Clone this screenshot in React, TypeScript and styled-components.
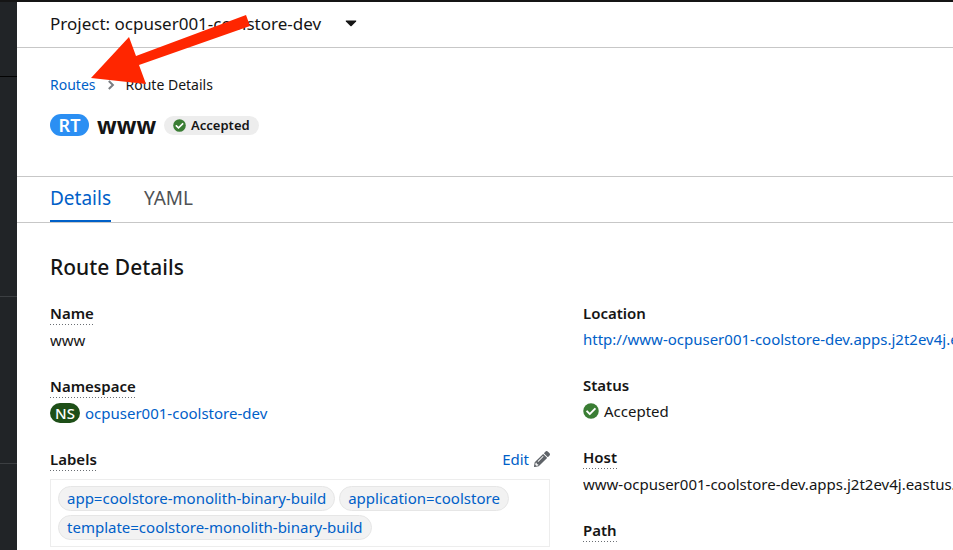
import React from "react";
import styled, { createGlobalStyle } from "styled-components";

const link = "#0060c8";
const ink = "#151515";
const rule = "#c7c7c7";

const GlobalStyle = createGlobalStyle`
  *, *::before, *::after { box-sizing: border-box; }
  body {
    margin: 0;
    color: ${ink};
    background: #fff;
    font: 400 15px/24px "Noto Sans", "Open Sans", sans-serif;
    overflow: hidden;
  }
  button { font: inherit; color: inherit; }
`;

const Page = styled.div`
  display: flex;
  height: 100vh;
  border-top: 2px solid ${ink};
  overflow: hidden;
`;

const Sidebar = styled.nav`
  flex: 0 0 17px;
  display: flex;
  flex-direction: column;
  background: #212427;
`;

const SidebarSection = styled.div<{ $height: number; $line: string }>`
  height: ${(p) => p.$height}px;
  border-bottom: 1px solid ${(p) => p.$line};
`;

const Main = styled.main`
  flex: 1;
  min-width: 0;
`;

const ProjectBar = styled.div`
  display: flex;
  align-items: center;
  height: 46px;
  padding: 0 33px 2px;
  border-bottom: 1px solid ${rule};
`;

const ProjectButton = styled.button`
  display: flex;
  align-items: center;
  gap: 24px;
  padding: 0;
  border: 0;
  background: none;
  font-size: 17px;
  line-height: 24px;
  white-space: nowrap;
`;

const Header = styled.header`
  height: 129px;
  padding: 25px 33px 0;
  border-bottom: 1px solid ${rule};
`;

const Breadcrumb = styled.ol`
  display: flex;
  align-items: center;
  gap: 11px;
  margin: 0 0 16px;
  padding: 0;
  list-style: none;
  font-size: 14px;
`;

const Crumb = styled.li`
  display: flex;
  align-items: center;
  gap: 11px;
`;

const Link = styled.a`
  color: ${link};
  text-decoration: none;
`;

const Title = styled.h1`
  display: flex;
  align-items: center;
  gap: 8px;
  margin: 0;
  font-size: 23px;
  font-weight: 700;
  line-height: 24px;
`;

const KindBadge = styled.span<{ $color: string; $large?: boolean }>`
  display: inline-flex;
  align-items: center;
  justify-content: center;
  width: ${(p) => (p.$large ? 39 : 30)}px;
  height: ${(p) => (p.$large ? 22 : 20)}px;
  border-radius: 11px;
  color: #fff;
  background: ${(p) => p.$color};
  font-size: ${(p) => (p.$large ? 18 : 15)}px;
  font-weight: ${(p) => (p.$large ? 600 : 500)};
  line-height: 20px;
`;

const StatusPill = styled.span`
  display: inline-flex;
  align-items: center;
  gap: 5px;
  height: 19px;
  padding: 0 9px;
  border-radius: 10px;
  background: #ededed;
  font-size: 13px;
  font-weight: 600;
  line-height: 18px;
`;

const Tabs = styled.div`
  display: flex;
  gap: 33px;
  height: 46px;
  padding: 0 33px;
  border-bottom: 1px solid ${rule};
`;

const Tab = styled.button<{ $active?: boolean }>`
  padding: 0 0 3px;
  border: 0;
  background: none;
  color: ${(p) => (p.$active ? link : "#4f5255")};
  box-shadow: ${(p) => (p.$active ? `inset 0 -2px ${link}` : "none")};
  font-size: 19px;
  line-height: 40px;
`;

const Body = styled.section`
  padding: 30px 0 0 33px;
`;

const Heading = styled.h2`
  margin: 0 0 20px;
  font-size: 21px;
  font-weight: 500;
  line-height: 28px;
`;

const Columns = styled.div`
  display: grid;
  grid-template-columns: 500px minmax(0, 1fr);
  gap: 33px;
`;

const Fields = styled.dl`
  display: flex;
  flex-direction: column;
  gap: 22px;
  min-width: 0;
  margin: 0;
`;

const Field = styled.div`
  min-width: 0;
`;

const Term = styled.dt<{ $hint?: boolean }>`
  display: flex;
  align-items: flex-start;
  justify-content: space-between;
  height: ${(p) => (p.$hint ? 27 : 26)}px;
  font-weight: 600;
`;

const Hint = styled.span`
  height: 24px;
  background: repeating-linear-gradient(90deg, #6a6e73 0 1px, transparent 1px 3px)
    bottom / 100% 1px no-repeat;
`;

const Value = styled.dd<{ $gap?: number }>`
  display: flex;
  align-items: center;
  gap: ${(p) => p.$gap ?? 0}px;
  margin: 0;
  overflow: hidden;
  white-space: nowrap;
`;

const EditButton = styled.button`
  display: flex;
  align-items: center;
  gap: 5px;
  padding: 0;
  border: 0;
  background: none;
  color: ${link};
  font-weight: 400;
`;

const LabelBox = styled.dd`
  display: flex;
  flex-wrap: wrap;
  gap: 4px;
  margin: 5px 0 0;
  padding: 6px 7px;
  border: 1px solid #ededed;
`;

const Chip = styled.a`
  padding: 0 8px;
  border: 1px solid #e6e6e6;
  border-radius: 13px;
  background: #f2f2f2;
  color: ${link};
  line-height: 23px;
  text-decoration: none;
`;

const CheckIcon = ({ size }: { size: number }) => (
  <svg width={size} height={size} viewBox="0 0 512 512" aria-hidden="true">
    <circle cx="256" cy="256" r="248" fill="#3a7d34" />
    <path
      fill="#fff"
      d="M227 387 411 203a16 16 0 0 0 0-23l-22-22a16 16 0 0 0-23 0L216 308l-70-70a16 16 0 0 0-23 0l-22 22a16 16 0 0 0 0 23l104 104a16 16 0 0 0 22 0z"
    />
  </svg>
);

const CaretIcon = () => (
  <svg width="12" height="7" viewBox="0 0 12 7" aria-hidden="true">
    <path d="M1.2.5h9.6q.9.2.3.9L6.6 6q-.6.5-1.2 0L.9 1.4Q.3.7 1.2.5z" fill={ink} />
  </svg>
);

const ChevronIcon = () => (
  <svg width="8" height="10" viewBox="0 0 8 10" aria-hidden="true">
    <path d="M1.8 1 5.9 5 1.8 9" fill="none" stroke="#7a7d82" strokeWidth="2" />
  </svg>
);

const PencilIcon = () => (
  <svg width="16" height="16" viewBox="0 0 512 512" aria-hidden="true">
    <path
      fill="#5f6368"
      d="M498 142l-47 47c-5 5-12 5-17 0L323 78c-5-5-5-12 0-17l47-47c19-19 49-19 68 0l60 60c19 19 19 49 0 68zM284 100 22 362 0 484c-3 16 11 31 28 28l122-22 262-262c5-5 5-12 0-17L301 100c-5-5-13-5-17 0zM124 340c-5-6-5-14 0-20l154-154c6-5 14-5 20 0s5 14 0 20L144 340c-6 5-14 5-20 0zm-36 84h48v36l-65 11-30-30 11-65h36z"
    />
  </svg>
);

const Pointer = styled.svg`
  position: absolute;
  top: 0;
  left: 80px;
  pointer-events: none;
`;

const labels = [
  "app=coolstore-monolith-binary-build",
  "application=coolstore",
  "template=coolstore-monolith-binary-build",
];

export default function App() {
  return (
    <>
      <GlobalStyle />
      <Page>
        <Sidebar aria-label="Main navigation">
          <SidebarSection $height={75} $line="#030303" />
          <SidebarSection $height={220} $line="#3c3f42" />
          <SidebarSection $height={167} $line="#3c3f42" />
        </Sidebar>
        <Main>
          <ProjectBar>
            <ProjectButton>
              Project: ocpuser001-coolstore-dev
              <CaretIcon />
            </ProjectButton>
          </ProjectBar>
          <Header>
            <Breadcrumb>
              <Crumb>
                <Link href="#routes">Routes</Link>
                <ChevronIcon />
              </Crumb>
              <Crumb>Route Details</Crumb>
            </Breadcrumb>
            <Title>
              <KindBadge $color="#2b8ff3" $large>RT</KindBadge>
              www
              <StatusPill>
                <CheckIcon size={13} />
                Accepted
              </StatusPill>
            </Title>
          </Header>
          <Tabs role="tablist">
            <Tab role="tab" aria-selected="true" $active>Details</Tab>
            <Tab role="tab" aria-selected="false">YAML</Tab>
          </Tabs>
          <Body>
            <Heading>Route Details</Heading>
            <Columns>
              <Fields>
                <Field>
                  <Term $hint><Hint>Name</Hint></Term>
                  <Value>www</Value>
                </Field>
                <Field>
                  <Term $hint><Hint>Namespace</Hint></Term>
                  <Value $gap={5}>
                    <KindBadge $color="#1e4f18">NS</KindBadge>
                    <Link href="#namespace">ocpuser001-coolstore-dev</Link>
                  </Value>
                </Field>
                <Field>
                  <Term $hint>
                    <Hint>Labels</Hint>
                    <EditButton>
                      Edit
                      <PencilIcon />
                    </EditButton>
                  </Term>
                  <LabelBox>
                    {labels.map((label) => (
                      <Chip key={label} href="#search">{label}</Chip>
                    ))}
                  </LabelBox>
                </Field>
              </Fields>
              <Fields>
                <Field>
                  <Term>Location</Term>
                  <Value>
                    <Link href="#location">http://www-ocpuser001-coolstore-dev.apps.j2t2ev4j.eastus.aroapp.io</Link>
                  </Value>
                </Field>
                <Field>
                  <Term>Status</Term>
                  <Value $gap={5}>
                    <CheckIcon size={16} />
                    Accepted
                  </Value>
                </Field>
                <Field>
                  <Term $hint><Hint>Host</Hint></Term>
                  <Value>www-ocpuser001-coolstore-dev.apps.j2t2ev4j.eastus.aroapp.io</Value>
                </Field>
                <Field>
                  <Term $hint><Hint>Path</Hint></Term>
                </Field>
              </Fields>
            </Columns>
          </Body>
        </Main>
      </Page>
      <Pointer width="180" height="100" viewBox="0 0 180 100" aria-hidden="true">
        <path d="M11 78 49 37 56 56 166 15 170 26 59 65 66 84z" fill="#ff2600" />
      </Pointer>
    </>
  );
}
